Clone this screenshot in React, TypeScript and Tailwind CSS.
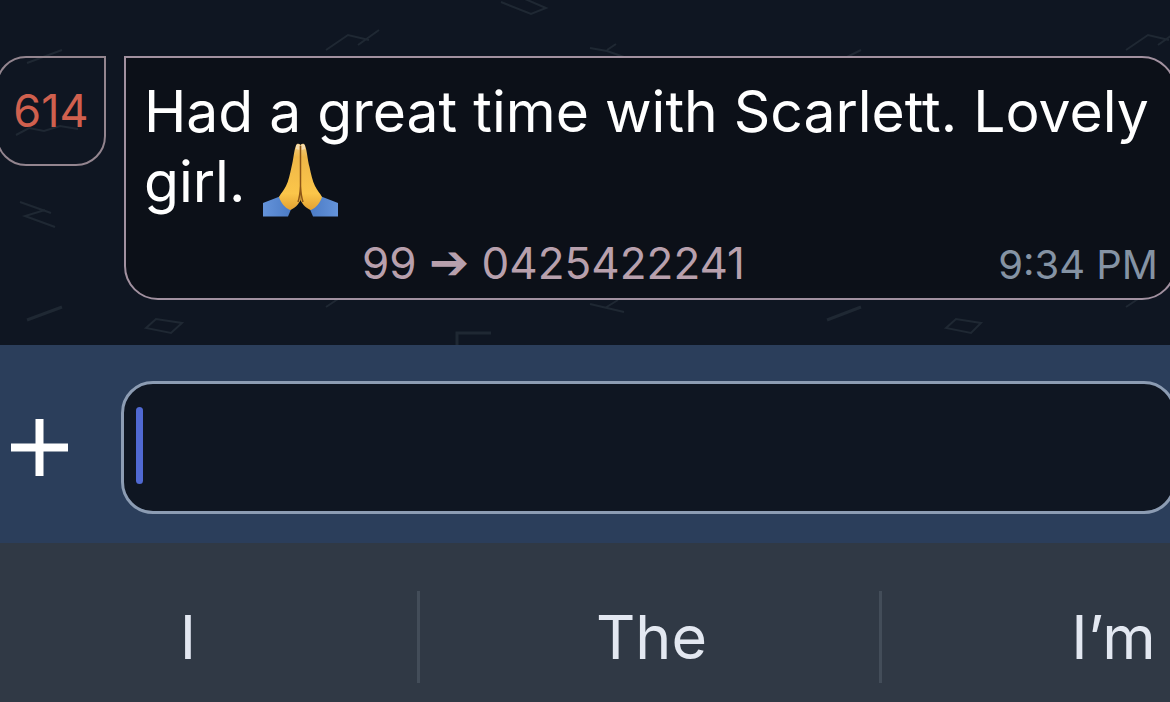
import React from "react";

const suggestions = ["I", "The", "I’m"];

function Wallpaper() {
  return (
    <svg
      aria-hidden="true"
      className="pointer-events-none absolute left-0 top-0 h-[345px] w-[1170px]"
      viewBox="0 0 1170 345"
      fill="none"
      stroke="#1f2833"
      strokeWidth="2"
    >
      <path d="M501 2 531 14 546 8 525 -1" />
      <path d="M326 50 348 35 369 40M379 30 358 45" />
      <path d="M1126 50 1148 35 1169 40M1179 30 1158 45" />
      <path d="M27 63 62 50" />
      <path d="M827 67 861 50" />
      <path d="M590 48 607 51 624 57M607 50 616 44" />
      <path d="M16 135 29 128 44 131 60 126 78 129" />
      <path d="M20 202 51 213M45 210 25 216 55 227" />
      <path d="M27 320 62 307" strokeWidth="3" />
      <path d="M827 320 861 307" strokeWidth="3" />
      <path d="M146 328 156 319 182 323 171 333Z" />
      <path d="M946 328 956 319 981 323 971 333Z" />
      <path d="M590 304 624 312M605 308 618 300" />
      <path d="M326 307 338 299M1126 307 1138 299" />
      <path d="M457 345V333H491" strokeWidth="3" />
    </svg>
  );
}

function FoldedHands() {
  return (
    <svg
      role="img"
      aria-label="🙏"
      viewBox="0 0 75 75"
      className="-mt-4 ml-0.5 inline-block size-[75px] align-[-16px]"
    >
      <defs>
        <linearGradient id="hand" x1="0" y1="0" x2="0" y2="1">
          <stop offset="0" stopColor="#f3cf86" />
          <stop offset="0.2" stopColor="#efb748" />
          <stop offset="0.75" stopColor="#fbc64a" />
          <stop offset="1" stopColor="#e3a132" />
        </linearGradient>
        <linearGradient id="cuff" x1="0" y1="0" x2="1" y2="0">
          <stop offset="0" stopColor="#6493da" />
          <stop offset="1" stopColor="#4a7ac4" />
        </linearGradient>
      </defs>
      <g id="half">
        <path d="M0 60 18 53 29 64 25 73.500H0Z" fill="url(#cuff)" />
        <path
          d="M37.500 2C36 .2 33.500.4 33 2.500 31 7 30.500 17 28.500 24 27 31 25.500 38 23 43 20.500 48 18 50 16 54 18 60 22 65 27 67 31 66 36 61 37.500 57Z"
          fill="url(#hand)"
        />
        <path d="M33 3Q34.500 0 36.500 2V7L33 6Z" fill="#f6dcae" />
      </g>
      <use href="#half" transform="matrix(-1 0 0 1 75 0)" />
      <path d="M37.500 3V43Q37 53 35 59M37.500 43Q38 53 40 59" stroke="#8c5516" strokeWidth="1.500" fill="none" />
    </svg>
  );
}

export default function App() {
  return (
    <main className="flex min-h-screen flex-col overflow-hidden bg-[#303945] font-['Inter',sans-serif]">
      <section className="relative overflow-hidden bg-[#0f1622] pb-[45px] pt-14">
        <Wallpaper />
        <div className="relative -ml-1 -mr-1.5 flex items-start gap-[18px]">
          <div className="flex h-[110px] w-[110px] shrink-0 items-center justify-center rounded-[30px] rounded-tr-none border-2 border-[#93858f] text-[45px] text-[#d0604e]">
            614
          </div>
          <article className="min-w-0 flex-1 rounded-[34px] rounded-tl-none border-2 border-[#a291a0] bg-[#0c1018] pb-[9px] pl-[18px] pr-4 pt-[19px]">
            <p className="text-[57px] leading-[70px] text-white">
              Had a great time with Scarlett. Lovely girl. <FoldedHands />
            </p>
            <div className="mt-[19px] flex h-[52px] items-baseline justify-between whitespace-nowrap pl-[218px] leading-[52px]">
              <span className="text-[44px] text-[#b8a0ad]">
                99 <span className="font-['DejaVu_Sans'] text-[48px] leading-none">➔</span> 0425422241
              </span>
              <time className="text-[40px] text-[#8593a4]">9:34 PM</time>
            </div>
          </article>
        </div>
      </section>

      <form className="flex items-center bg-[#2b3e5b] pb-[29px] pt-9" onSubmit={(e) => e.preventDefault()}>
        <button type="button" aria-label="Add attachment" className="ml-[11px] shrink-0">
          <svg viewBox="0 0 57 57" className="size-[57px]" stroke="#fff" strokeWidth="8">
            <path d="M0 28.500H57M28.500 0V57" />
          </svg>
        </button>
        <div className="relative -mr-1.5 ml-[53px] min-w-0 flex-1">
          <input
            type="text"
            aria-label="Message"
            className="block h-[133px] w-full rounded-[32px] border-[3px] border-[#8c9cb3] bg-[#0f1622] px-5 text-[57px] text-white caret-transparent outline-none"
          />
          <span aria-hidden="true" className="pointer-events-none absolute left-[15px] top-[26px] h-[77px] w-[7px] rounded-sm bg-[#5069d2]" />
        </div>
      </form>

      <div className="-ml-[45px] -mr-[171px] grid flex-1 grid-cols-3 items-start pt-12">
        {suggestions.map((word) => (
          <button
            key={word}
            type="button"
            className="h-[92px] border-l-[3px] border-[#434d59] pl-1 text-[61px] leading-[92px] text-[#e3e8f1] first:border-l-0"
          >
            {word}
          </button>
        ))}
      </div>
    </main>
  );
}
